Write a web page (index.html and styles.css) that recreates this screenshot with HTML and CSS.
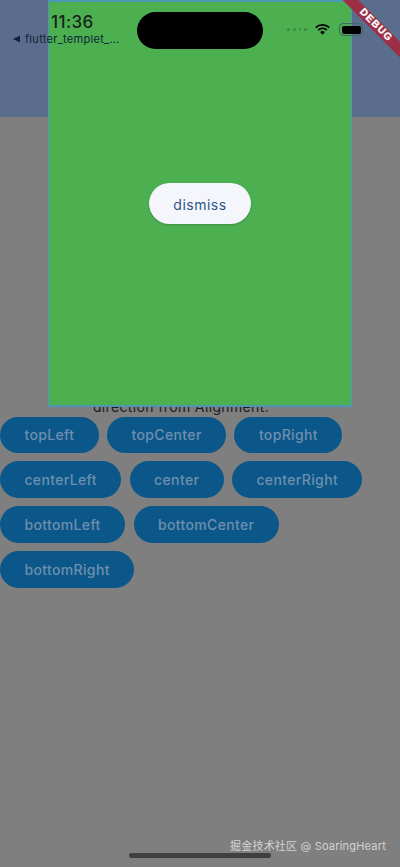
FILE: index.html
```html
<!DOCTYPE html>
<html lang="en">
<head>
<meta charset="utf-8">
<title>flutter_templet</title>
<link rel="stylesheet" href="styles.css">
</head>
<body>
<div class="page">
  <header class="appbar"></header>
  <main class="content">
    <p class="desc">direction from Alignment.</p>
    <div class="buttons">
      <button class="btn">topLeft</button>
      <button class="btn">topCenter</button>
      <button class="btn">topRight</button>
      <button class="btn">centerLeft</button>
      <button class="btn">center</button>
      <button class="btn">centerRight</button>
      <button class="btn">bottomLeft</button>
      <button class="btn">bottomCenter</button>
      <button class="btn">bottomRight</button>
    </div>
  </main>

  <section class="sheet">
    <button class="dismiss">dismiss</button>
  </section>

  <div class="status-left">
    <span class="time">11:36</span>
    <span class="back"><svg class="back-arrow" viewBox="0 0 8 8"><path d="M0 4 8 0V8Z"/></svg>flutter_templet_...</span>
  </div>
  <div class="island"></div>
  <div class="status-right">
    <span class="dots"><i></i><i></i><i></i><i></i></span>
    <svg class="wifi" viewBox="0 0 18 13"><path d="M9 2.6c2.500 0 4.800 1 6.500 2.600l1.300-1.400A11.300 11.300 0 0 0 9 .6 11.300 11.300 0 0 0 1.200 3.800l1.300 1.400A9.400 9.400 0 0 1 9 2.600Z"/><path d="M9 6.300c1.500 0 2.900.6 3.900 1.500l1.300-1.400A7.600 7.600 0 0 0 9 4.400a7.600 7.600 0 0 0-5.200 2l1.300 1.400A5.800 5.800 0 0 1 9 6.300Z"/><path d="M9 8.200c-1 0-1.800.4-2.500 1L9 12l2.500-2.800c-.7-.6-1.500-1-2.500-1Z"/></svg>
    <span class="battery"><span class="battery-fill"></span></span>
  </div>

  <div class="ribbon">DEBUG</div>
  <div class="watermark">掘金技术社区 @ SoaringHeart</div>
  <div class="home"></div>
</div>
</body>
</html>
```
FILE: styles.css
```css
* { box-sizing: border-box; }
html, body { margin: 0; padding: 0; }
body { background: #7f7f7f; font-family: Inter, "Noto Sans CJK SC", sans-serif; }
.page { position: relative; width: 400px; height: 867px; overflow: hidden; background: #7f7f7f; }
.appbar { height: 117px; background: #5a6d8c; }
.content { padding-top: 280.600px; }
.desc { margin: 0; height: 19px; padding-right: 38px; text-align: center; font-size: 14px; line-height: 17px; color: #1c1c1c; letter-spacing: .36px; }
.buttons { display: flex; flex-wrap: wrap; gap: 8.400px; }
.btn { height: 36.500px; padding: 0 24.400px; border: 0; border-radius: 19px; background: #0c5789; color: #6e8fae; font: 500 14px/36px Inter, sans-serif; letter-spacing: .36px; }
.sheet { position: absolute; left: 48px; top: 0; width: 304px; height: 407px; display: flex; align-items: center; justify-content: center; background: #4caf50; border: 2px solid #4b97b5; border-width: 2px 1px 2px 1px; }
.dismiss { width: 102px; height: 41px; border: 0; border-radius: 21px; background: #f4f6fc; color: #2f5585; font: 400 14px/41px Inter, sans-serif; letter-spacing: .5px; box-shadow: 0 1px 2px rgba(0,0,0,.2); }
.status-left { position: absolute; left: 0; top: 13px; width: 130px; color: #15231a; }
.time { display: block; margin-left: 51px; font: 500 17px/18px Inter, sans-serif; letter-spacing: .4px; }
.back { display: flex; align-items: center; margin: 2.500px 0 0 13px; font: 400 11px/10px Inter, sans-serif; letter-spacing: .3px; color: #10233a; white-space: nowrap; }
.back-arrow { width: 7px; height: 8px; margin-right: 5px; fill: #10233a; }
.island { position: absolute; left: 137px; top: 12px; width: 126px; height: 37px; border-radius: 19px; background: #000; }
.status-right { position: absolute; left: 287px; top: 23px; display: flex; align-items: center; }
.dots { display: flex; gap: 3px; width: 20px; }
.dots i { width: 3.500px; height: 3.500px; border-radius: 50%; background: #3a8d3f; }
.wifi { width: 17px; height: 13px; margin-left: 7px; fill: #000; }
.battery { display: block; width: 24px; height: 13px; margin-left: 8px; padding: 1.500px; border: 1px solid #3f6a63; border-radius: 4px; }
.battery-fill { display: block; height: 100%; border-radius: 2px; background: #000; }
.ribbon { position: absolute; left: 331px; top: 19.750px; width: 90px; height: 10.500px; transform: rotate(45deg); background: #9c2f45; color: #fff; font: 800 10px/10.500px "Liberation Sans", sans-serif; letter-spacing: 1.200px; text-align: center; -webkit-text-stroke: .3px #fff; }
.watermark { position: absolute; right: 14px; top: 838px; font: 400 11px/16px Inter, "Noto Sans CJK SC", sans-serif; color: #d4d4d4; white-space: nowrap; letter-spacing: .2px; }
.home { position: absolute; left: 129px; top: 853px; width: 142px; height: 5px; border-radius: 3px; background: #3f3f3f; }
```
